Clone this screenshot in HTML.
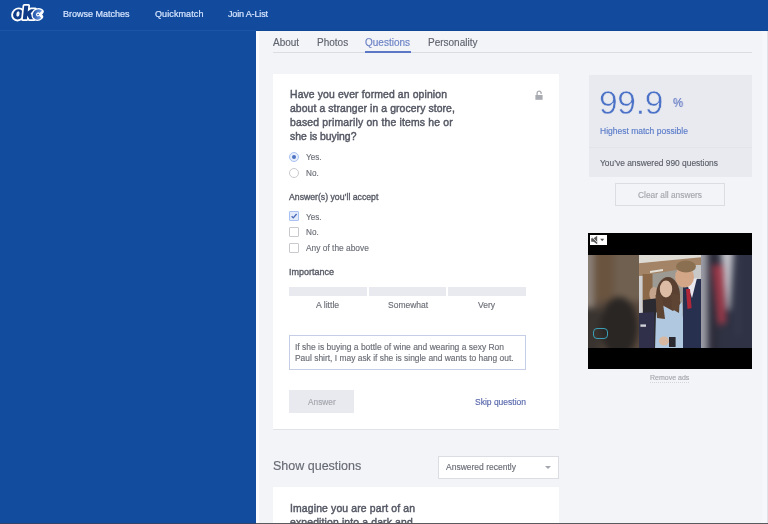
<!DOCTYPE html>
<html><head><meta charset="utf-8"><style>
html,body{margin:0;padding:0;width:768px;height:524px;overflow:hidden;background:#f3f4f8}
.r{position:absolute}
.t{position:absolute;white-space:nowrap;font-family:"Liberation Sans",sans-serif;will-change:transform;-webkit-text-stroke-width:0.15px}
</style></head><body>
<div class="r" style="left:0px;top:0px;width:768px;height:524px;background:#f3f4f8"></div>
<div class="r" style="left:0px;top:0px;width:256px;height:524px;background:#114c9f"></div>
<div class="r" style="left:256px;top:31px;width:3px;height:492px;background:#fbfbfd"></div>
<div class="r" style="left:762px;top:31px;width:5px;height:492px;background:#f6f7fa"></div>
<div class="r" style="left:767px;top:31px;width:1px;height:492px;background:#dfe0e8"></div>
<div class="r" style="left:0px;top:0px;width:768px;height:30px;background:#124a9d"></div>
<div class="r" style="left:0px;top:30px;width:256px;height:1px;background:#1b56a6"></div>
<div class="r" style="left:256px;top:30px;width:512px;height:1px;background:#0f4792"></div>
<svg class="r" style="left:0;top:0" width="50" height="26" viewBox="0 0 50 26"><defs><linearGradient id="cg" x1="0" x2="1"><stop offset="0" stop-color="#2d5db0"/><stop offset="1" stop-color="#6a96e0"/></linearGradient></defs><g transform="translate(0 19.3) skewX(-6) translate(0 -19.3)"><ellipse cx="17.6" cy="14.4" rx="5" ry="5.1" fill="#0f3a88" stroke="#fff" stroke-width="3.8" paint-order="stroke"/><ellipse cx="17.4" cy="14.0" rx="1.6" ry="2.7" fill="#f4f8ff"/><path d="M22.8 5.8 H26.9 V11.6 L29.9 9.2 H34.2 L30.0 13.2 L34.0 19.3 H29.4 L26.9 15.6 V19.3 H22.8 Z" fill="#0f3a88" stroke="#fff" stroke-width="3.4" stroke-linejoin="round" paint-order="stroke"/><path d="M40.0 11.85 A3.6 3.6 0 1 0 40.0 16.95" fill="none" stroke="#fff" stroke-width="5.8" stroke-linecap="round"/><path d="M40.0 11.85 A3.6 3.6 0 1 0 40.0 16.95" fill="none" stroke="url(#cg)" stroke-width="3.3"/></g></svg>
<div class="t" style="left:63px;top:10.38px;font-size:9px;line-height:9px;color:#d6e6ff;-webkit-text-stroke:0.2px #d6e6ff;">Browse Matches</div>
<div class="t" style="left:154.5px;top:10.38px;font-size:9px;line-height:9px;color:#d6e6ff;letter-spacing:0.1px;-webkit-text-stroke:0.2px #d6e6ff;">Quickmatch</div>
<div class="t" style="left:227.5px;top:10.38px;font-size:9px;line-height:9px;color:#d6e6ff;letter-spacing:-0.15px;-webkit-text-stroke:0.2px #d6e6ff;">Join A-List</div>
<div class="t" style="left:273px;top:37.53px;font-size:10px;line-height:10px;color:#60646f;-webkit-text-stroke:0.15px #60646f;">About</div>
<div class="t" style="left:317px;top:37.53px;font-size:10px;line-height:10px;color:#60646f;-webkit-text-stroke:0.15px #60646f;">Photos</div>
<div class="t" style="left:365px;top:37.53px;font-size:10px;line-height:10px;color:#6a80c4;-webkit-text-stroke:0.15px #6a80c4;">Questions</div>
<div class="t" style="left:428px;top:37.53px;font-size:10px;line-height:10px;color:#60646f;-webkit-text-stroke:0.15px #60646f;">Personality</div>
<div class="r" style="left:273px;top:52px;width:479px;height:1px;background:#dcdde3"></div>
<div class="r" style="left:365px;top:51px;width:46px;height:2px;background:#5b78c4"></div>
<div class="r" style="left:273px;top:74px;width:286px;height:355px;background:#fff;box-shadow:0 1px 0 #e2e3e8"></div>
<div class="t" style="left:290px;top:89.69px;font-size:10.4px;line-height:10.4px;color:#555864;letter-spacing:0.13px;-webkit-text-stroke:0.45px #555864;">Have you ever formed an opinion</div>
<div class="t" style="left:290px;top:103.69px;font-size:10.4px;line-height:10.4px;color:#555864;letter-spacing:0.09px;-webkit-text-stroke:0.45px #555864;">about a stranger in a grocery store,</div>
<div class="t" style="left:290px;top:117.69px;font-size:10.4px;line-height:10.4px;color:#555864;letter-spacing:0.19px;-webkit-text-stroke:0.45px #555864;">based primarily on the items he or</div>
<div class="t" style="left:290px;top:131.69px;font-size:10.4px;line-height:10.4px;color:#555864;letter-spacing:0.0px;-webkit-text-stroke:0.45px #555864;">she is buying?</div>
<svg class="r" style="left:534px;top:89px" width="10" height="12" viewBox="0 0 10 12"><path d="M3.1 6.2 V4.2 A2 2 0 0 1 7.1 4.2 V5" fill="none" stroke="#a9abb2" stroke-width="1.3"/><rect x="1.4" y="6" width="7.2" height="4.8" fill="#a9abb2"/></svg>
<div class="r" style="left:289px;top:152px;width:8px;height:8px;border:1px solid #a9c1f2;border-radius:50%;background:#e8effc"></div>
<div class="r" style="left:292px;top:155px;width:4px;height:4px;border-radius:50%;background:#4d72c4"></div>
<div class="r" style="left:289px;top:167.5px;width:8px;height:8px;border:1px solid #c9cacf;border-radius:50%;background:#fff"></div>
<div class="t" style="left:305.5px;top:153.56px;font-size:8.2px;line-height:8.2px;color:#6c6f78;">Yes.</div>
<div class="t" style="left:305.5px;top:169.76px;font-size:8.2px;line-height:8.2px;color:#6c6f78;">No.</div>
<div class="t" style="left:289px;top:193.13px;font-size:8.7px;line-height:8.7px;color:#585b66;-webkit-text-stroke:0.35px #585b66;">Answer(s) you’ll accept</div>
<div class="r" style="left:289px;top:211px;width:8px;height:8px;border:1px solid #a9c1f2;border-radius:1px;background:#e3ebfb"></div>
<svg class="r" style="left:289px;top:211px" width="10" height="10" viewBox="0 0 10 10"><path d="M2.6 5.2 L4.3 6.9 L7.6 3" fill="none" stroke="#4a68b8" stroke-width="1.3"/></svg>
<div class="r" style="left:289px;top:227px;width:8px;height:8px;border:1px solid #c9cacf;border-radius:1px;background:#fff"></div>
<div class="r" style="left:289px;top:243px;width:8px;height:8px;border:1px solid #c9cacf;border-radius:1px;background:#fff"></div>
<div class="t" style="left:305.5px;top:213.76px;font-size:8.2px;line-height:8.2px;color:#6c6f78;">Yes.</div>
<div class="t" style="left:305.5px;top:228.56px;font-size:8.2px;line-height:8.2px;color:#6c6f78;">No.</div>
<div class="t" style="left:305.5px;top:243.89px;font-size:8.4px;line-height:8.4px;color:#6c6f78;">Any of the above</div>
<div class="t" style="left:289px;top:267.88px;font-size:9px;line-height:9px;color:#585b66;-webkit-text-stroke:0.35px #585b66;">Importance</div>
<div class="r" style="left:289px;top:287px;width:78px;height:9px;background:#e9eaef"></div>
<div class="r" style="left:369px;top:287px;width:77px;height:9px;background:#e9eaef"></div>
<div class="r" style="left:448px;top:287px;width:78px;height:9px;background:#e9eaef"></div>
<div class="t" style="left:316px;top:301.13px;font-size:8.7px;line-height:8.7px;color:#6c6f78;">A little</div>
<div class="t" style="left:387.5px;top:301.30px;font-size:8.5px;line-height:8.5px;color:#6c6f78;">Somewhat</div>
<div class="t" style="left:478px;top:301.30px;font-size:8.5px;line-height:8.5px;color:#6c6f78;">Very</div>
<div class="r" style="left:289px;top:335px;width:235px;height:33px;border:1px solid #c6cde6;background:#fff"></div>
<div class="t" style="left:295px;top:342.83px;font-size:8.47px;line-height:8.47px;color:#6a6d76;">If she is buying a bottle of wine and wearing a sexy Ron</div>
<div class="t" style="left:295px;top:354.35px;font-size:8.44px;line-height:8.44px;color:#6a6d76;">Paul shirt, I may ask if she is single and wants to hang out.</div>
<div class="r" style="left:289px;top:390px;width:65px;height:23px;background:#e9eaef"></div>
<div class="t" style="left:308px;top:397.97px;font-size:8.3px;line-height:8.3px;color:#a4a6ad;">Answer</div>
<div class="t" style="left:474.5px;top:397.80px;font-size:8.5px;line-height:8.5px;color:#5868ac;">Skip question</div>
<div class="t" style="left:272.5px;top:460.42px;font-size:12.5px;line-height:12.5px;color:#676a74;">Show questions</div>
<div class="r" style="left:438px;top:456px;width:119px;height:21px;background:#fff;border:1px solid #dcdde2"></div>
<div class="t" style="left:445.5px;top:463.30px;font-size:8.5px;line-height:8.5px;color:#6a6d76;">Answered recently</div>
<div class="r" style="left:545px;top:466px;width:0;height:0;border-left:3px solid transparent;border-right:3px solid transparent;border-top:3px solid #a4a6ad"></div>
<div class="r" style="left:273px;top:487px;width:286px;height:40px;background:#fff"></div>
<div class="t" style="left:289.5px;top:504.19px;font-size:10.4px;line-height:10.4px;color:#555864;letter-spacing:0.15px;-webkit-text-stroke:0.45px #555864;">Imagine you are part of an</div>
<div class="t" style="left:289.5px;top:518.19px;font-size:10.4px;line-height:10.4px;color:#555864;letter-spacing:0.15px;-webkit-text-stroke:0.45px #555864;">expedition into a dark and</div>
<div class="r" style="left:589px;top:75px;width:163px;height:102px;background:#e9eaf0"></div>
<div class="r" style="left:589px;top:147px;width:163px;height:1px;background:#e3e4ea"></div>
<div class="t" style="left:598.5px;top:85.85px;font-size:33.6px;line-height:33.6px;color:#4b72c6;letter-spacing:-0.3px;-webkit-text-stroke:0.55px #e9eaf0;">99.9</div>
<div class="t" style="left:672.5px;top:95.62px;font-size:13.2px;line-height:13.2px;color:#6078c2;transform:scaleX(0.86);transform-origin:0 0;-webkit-text-stroke:0.2px #6078c2;">%</div>
<div class="t" style="left:599.5px;top:126.80px;font-size:8.5px;line-height:8.5px;color:#5a7cc8;">Highest match possible</div>
<div class="t" style="left:599.5px;top:159.19px;font-size:8.4px;line-height:8.4px;color:#5c5f69;">You’ve answered 990 questions</div>
<div class="r" style="left:615px;top:183px;width:108px;height:21px;background:#f3f4f8;border:1px solid #dcdde2"></div>
<div class="t" style="left:637.5px;top:190.93px;font-size:8.35px;line-height:8.35px;color:#a4a6ad;">Clear all answers</div>
<div class="r" style="left:588px;top:233px;width:164px;height:136px;background:#000"></div>
<div class="r" style="left:590px;top:235px;width:17px;height:10px;background:#fff"></div>
<svg class="r" style="left:590px;top:235px" width="17" height="10" viewBox="0 0 17 10"><polygon points="1.2,3.2 3.6,3.2 7.2,0.8 7.2,9.2 3.6,6.8 1.2,6.8" fill="#5a5a5a"/><line x1="1.2" y1="1.2" x2="7.6" y2="7.6" stroke="#dcdcdc" stroke-width="0.9"/><polygon points="10.2,3.8 14.2,3.8 12.2,6.3" fill="#505050"/></svg>
<div class="r" style="left:588px;top:255px;width:51px;height:93px;overflow:hidden;background:#4e4038"><svg class="r" style="left:-10px;top:-10px;filter:blur(3px)" width="71" height="113" viewBox="-10 -10 71 113"><rect x="-10" y="-10" width="71" height="113" fill="#5a4a3e"/><rect x="-10" y="-10" width="16.4" height="70" fill="#8a8078"/><rect x="-10" y="55" width="16.4" height="48" fill="#5a5048"/><rect x="6.4" y="-10" width="19.2" height="56" fill="#6a5440"/><rect x="25.6" y="-10" width="35.4" height="56" fill="#706050"/><rect x="-10" y="53" width="23" height="50" fill="#3a3430"/><ellipse cx="31" cy="72" rx="19" ry="30" fill="#2a2624"/></svg><div class="r" style="left:5.3px;top:72.6px;width:15px;height:11.8px;border:1.6px solid #3a9eb6;border-radius:4px;box-sizing:border-box"></div></div>
<div class="r" style="left:701px;top:255px;width:51px;height:93px;overflow:hidden;background:#2e3242"><svg class="r" style="left:-10px;top:-10px;filter:blur(3px)" width="71" height="113" viewBox="-10 -10 71 113"><rect x="-10" y="-10" width="71" height="113" fill="#2e3242"/><rect x="-10" y="-10" width="16.8" height="113" fill="#9c9ca6"/><rect x="6.8" y="-10" width="10" height="113" fill="#2c2c3a"/><polygon points="19,-10 37,-10 29,55 26,55" fill="#c0c0c8"/><polygon points="11,10 22,10 25,68 17,70" fill="#9a3848"/><polygon points="33,-10 61,-10 61,103 25,103 29,55" fill="#2e3244"/><rect x="36" y="0" width="2" height="80" fill="#3c4052"/></svg></div>
<div class="r" style="left:639px;top:255px;width:62px;height:93px;overflow:hidden;background:#9c9a92"><svg class="r" style="left:0;top:0;filter:blur(0.6px)" width="62" height="93" viewBox="0 0 62 93"><rect x="-2" y="-2" width="66" height="97" fill="#9c9a92"/><polygon points="-2,-2 64,-2 64,3 -2,9" fill="#dedad4"/><polygon points="-2,8.5 64,2 64,10.7 -2,21.4" fill="#a48466"/><polygon points="11,16 24,14 24,16 11,18" fill="#e4e0d8"/><rect x="3.5" y="19" width="10" height="34" fill="#8a6848"/><rect x="0" y="21" width="3.5" height="37" fill="#d0d0d2"/><rect x="41" y="10" width="23" height="18" fill="#c8c8c8"/><ellipse cx="15" cy="39" rx="4.7" ry="7" fill="#c4a48c"/><polygon points="4,45 20,43 22,95 4,95" fill="#2a2a30"/><polygon points="-2,58 15,57 15,95 -2,95" fill="#30304a"/><rect x="1.4" y="69.4" width="5.6" height="2.4" fill="#d0d0d8"/><ellipse cx="29" cy="41" rx="12" ry="19" fill="#5a4030"/><polygon points="17,48 41,46 44,62 18,64" fill="#5a4030"/><ellipse cx="27" cy="34" rx="6.2" ry="8.5" fill="#dcbca4"/><polygon points="17,58 23,50 34,56 43,47 46,95 16,95" fill="#b0c8e0"/><polygon points="16.5,40 23,40 26,64 18,63" fill="#5e4432"/><polygon points="32,38 41,40 40,58 33,54" fill="#5e4432"/><ellipse cx="25" cy="86" rx="5" ry="4.5" fill="#d8b8a0"/><rect x="30" y="82" width="6.6" height="10" fill="#2a2a30"/><polygon points="44,30 58,24 64,24 64,95 44,95" fill="#283050"/><polygon points="47,26 58,23 53,43" fill="#e8e8ee"/><polygon points="47,34 51,34 52.6,53 48.5,54" fill="#b02838"/><ellipse cx="45.5" cy="22" rx="9.5" ry="10.5" fill="#d4a688"/><ellipse cx="47" cy="11.5" rx="10" ry="6" fill="#8a7050"/></svg></div>
<div class="t" style="left:650px;top:373.57px;font-size:7px;line-height:7px;color:#a4a6ad;">Remove ads</div>
<div class="r" style="left:650px;top:382px;width:39px;height:1px;background:repeating-linear-gradient(90deg,#d4d5db 0 1px,transparent 1px 2px)"></div>
<div class="r" style="left:0px;top:523px;width:256px;height:1px;background:#2f4468"></div>
<div class="r" style="left:256px;top:523px;width:512px;height:1px;background:#5a5a5e"></div>
</body></html>
